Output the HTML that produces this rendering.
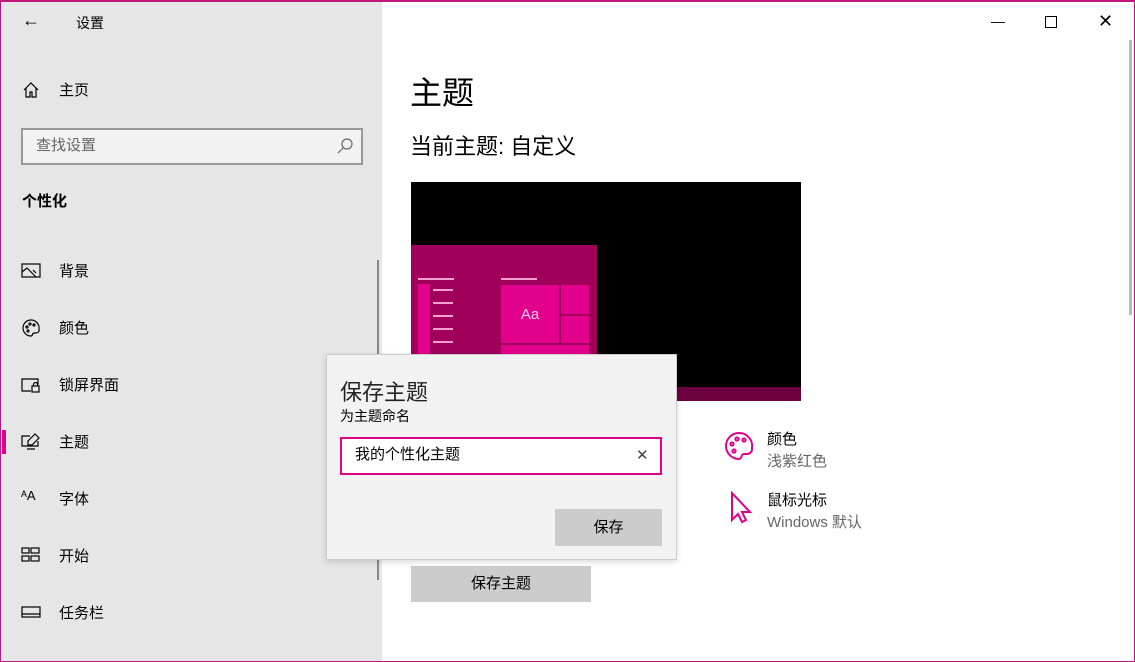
<!DOCTYPE html><html><head><meta charset="utf-8"><style>
*{margin:0;padding:0;box-sizing:border-box}
body{width:1135px;height:662px;overflow:hidden;font-family:"Liberation Sans","Noto Sans CJK SC",sans-serif;background:#fff;position:relative;color:#000}
.a{position:absolute}
.side{left:0;top:0;width:382px;height:662px;background:#e6e6e6}
.t{font-size:15px}
.ni{left:59px;font-size:15px}
</style></head><body>
<div class="a side"></div>
<div class="a" style="left:0;top:0;width:1135px;height:662px;border:1px solid #c0157a;border-top:2px solid #c0157a;z-index:9;pointer-events:none"></div>
<div class="a t" style="left:22px;top:10px;font-size:18px">←</div>
<div class="a" style="left:76px;top:13px;font-size:14px">设置</div>
<svg class="a" style="left:22px;top:81px" width="18" height="18" viewBox="0 0 18 18" fill="none" stroke="#000" stroke-width="1.2"><path d="M2 9L9 2l7 7M4 7v9h4v-5h2v5h4V7"/></svg>
<div class="a ni" style="top:79px">主页</div>
<div class="a" style="left:21px;top:128px;width:342px;height:37px;border:2px solid #999;background:#f2f2f2"></div>
<div class="a" style="left:36px;top:134px;font-size:15px;color:#666">查找设置</div>
<svg class="a" style="left:336px;top:137px" width="18" height="18" viewBox="0 0 18 18" fill="none" stroke="#666" stroke-width="1.2"><circle cx="11" cy="7" r="5"/><path d="M7.5 10.5L2 16"/></svg>
<div class="a" style="left:22px;top:190px;font-size:15px;font-weight:bold">个性化</div>
<svg class="a" style="left:21px;top:262px" width="20" height="18" viewBox="0 0 20 18" fill="none" stroke="#000" stroke-width="1.2"><rect x="1" y="2" width="18" height="13"/><path d="M1 10l5-4 9 9M12 8l3 3"/></svg>
<div class="a ni" style="top:260px">背景</div>
<svg class="a" style="left:21px;top:318px" width="20" height="20" viewBox="0 0 20 20" fill="none" stroke="#000" stroke-width="1.2"><path d="M10 2a8 8 0 1 0 0 16c2 0 1-3 3-3h2a3 3 0 0 0 3-4 8 8 0 0 0-8-9z"/><circle cx="6" cy="9" r="1"/><circle cx="9" cy="6" r="1"/><circle cx="13" cy="7" r="1"/><circle cx="7" cy="13" r="1"/></svg>
<div class="a ni" style="top:317px">颜色</div>
<svg class="a" style="left:21px;top:376px" width="20" height="18" viewBox="0 0 20 18" fill="none" stroke="#000" stroke-width="1.2"><path d="M10 15H1V3h16v6"/><rect x="11" y="10" width="7" height="6"/><path d="M12.5 10V8.5a2 2 0 0 1 4 0V10"/></svg>
<div class="a ni" style="top:374px">锁屏界面</div>
<div class="a" style="left:2px;top:430px;width:4px;height:24px;background:#e3008c"></div>
<svg class="a" style="left:21px;top:432px" width="20" height="18" viewBox="0 0 20 18" fill="none" stroke="#000" stroke-width="1.2"><path d="M9 4H1v10h16V9M6 17h8M14 2l4 4-7 7H7V9z"/></svg>
<div class="a ni" style="top:431px">主题</div>
<div class="a" style="left:21px;top:488px;font-size:13px">ᴬA</div>
<div class="a ni" style="top:488px">字体</div>
<svg class="a" style="left:21px;top:547px" width="20" height="16" viewBox="0 0 20 16" fill="none" stroke="#000" stroke-width="1.2"><rect x="1" y="1" width="7" height="5"/><rect x="10" y="1" width="8" height="5"/><rect x="1" y="9" width="7" height="5"/><rect x="10" y="9" width="8" height="5"/></svg>
<div class="a ni" style="top:545px">开始</div>
<svg class="a" style="left:21px;top:605px" width="20" height="14" viewBox="0 0 20 14" fill="none" stroke="#000" stroke-width="1.2"><rect x="1" y="2" width="18" height="10"/><path d="M1 9h18"/></svg>
<div class="a ni" style="top:602px">任务栏</div>
<div class="a" style="left:377px;top:260px;width:2px;height:320px;background:#888"></div>

<div class="a" style="left:991px;top:13px;font-size:14px">—</div>
<div class="a" style="left:1045px;top:16px;width:12px;height:12px;border:1px solid #000"></div>
<div class="a" style="left:1098px;top:11px;font-size:18px">✕</div>
<div class="a" style="left:1129px;top:40px;width:3px;height:275px;background:#bbb"></div>
<div class="a" style="left:410px;top:68px;font-size:32px">主题</div>
<div class="a" style="left:410px;top:129px;font-size:22px">当前主题: 自定义</div>

<div class="a" style="left:411px;top:182px;width:390px;height:219px;background:#000"></div>
<div class="a" style="left:411px;top:387px;width:390px;height:14px;background:#6d0040"></div>
<div class="a" style="left:411px;top:245px;width:186px;height:142px;background:#a0005c"></div>
<div class="a" style="left:418px;top:278px;width:36px;height:2px;background:#f5a0cf"></div>
<div class="a" style="left:501px;top:278px;width:36px;height:2px;background:#f5a0cf"></div>
<div class="a" style="left:418px;top:284px;width:12px;height:70px;background:#e3008c"></div>
<div class="a" style="left:433px;top:289px;width:20px;height:60px;background:repeating-linear-gradient(#f5a0cf 0 2px,transparent 2px 13px)"></div>
<div class="a" style="left:501px;top:285px;width:58px;height:58px;background:#e3008c;color:#fce;font-size:15px;text-align:center;line-height:60px">Aa</div>
<div class="a" style="left:561px;top:285px;width:28px;height:29px;background:#e3008c"></div>
<div class="a" style="left:561px;top:316px;width:28px;height:27px;background:#e3008c"></div>
<div class="a" style="left:501px;top:345px;width:88px;height:10px;background:#e3008c"></div>

<svg class="a" style="left:723px;top:430px" width="32" height="32" viewBox="0 0 32 32" fill="none" stroke="#e3008c" stroke-width="2"><path d="M16 3a13 13 0 1 0 0 26c3 0 2-5 5-5h3a5 5 0 0 0 5-6A13 13 0 0 0 16 3z"/><circle cx="9" cy="14" r="1.6"/><circle cx="14" cy="9" r="1.6"/><circle cx="21" cy="10" r="1.6"/><circle cx="11" cy="21" r="1.6"/></svg>
<div class="a" style="left:767px;top:428px;font-size:15px">颜色</div>
<div class="a" style="left:767px;top:450px;font-size:15px;color:#666">浅紫红色</div>
<svg class="a" style="left:729px;top:490px" width="24" height="34" viewBox="0 0 24 34" fill="none" stroke="#e3008c" stroke-width="2"><path d="M3 3v27l6-6 4 8 4-2-4-8h8z"/></svg>
<div class="a" style="left:767px;top:489px;font-size:15px">鼠标光标</div>
<div class="a" style="left:767px;top:511px;font-size:15px;color:#666">Windows 默认</div>
<div class="a" style="left:411px;top:566px;width:180px;height:36px;background:#ccc;font-size:15px;text-align:center;line-height:36px">保存主题</div>

<div class="a" style="left:326px;top:354px;width:351px;height:206px;background:#f2f2f2;border:1px solid #ccc;box-shadow:0 2px 6px rgba(0,0,0,.15)"></div>
<div class="a" style="left:340px;top:375px;font-size:22px;color:#222">保存主题</div>
<div class="a" style="left:340px;top:406px;font-size:14px">为主题命名</div>
<div class="a" style="left:340px;top:437px;width:322px;height:38px;border:2px solid #e3008c;background:#fff"></div>
<div class="a" style="left:355px;top:443px;font-size:15px">我的个性化主题</div>
<div class="a" style="left:636px;top:446px;font-size:15px;color:#444">✕</div>
<div class="a" style="left:555px;top:509px;width:107px;height:37px;background:#ccc;font-size:15px;text-align:center;line-height:37px">保存</div>
</body></html>
